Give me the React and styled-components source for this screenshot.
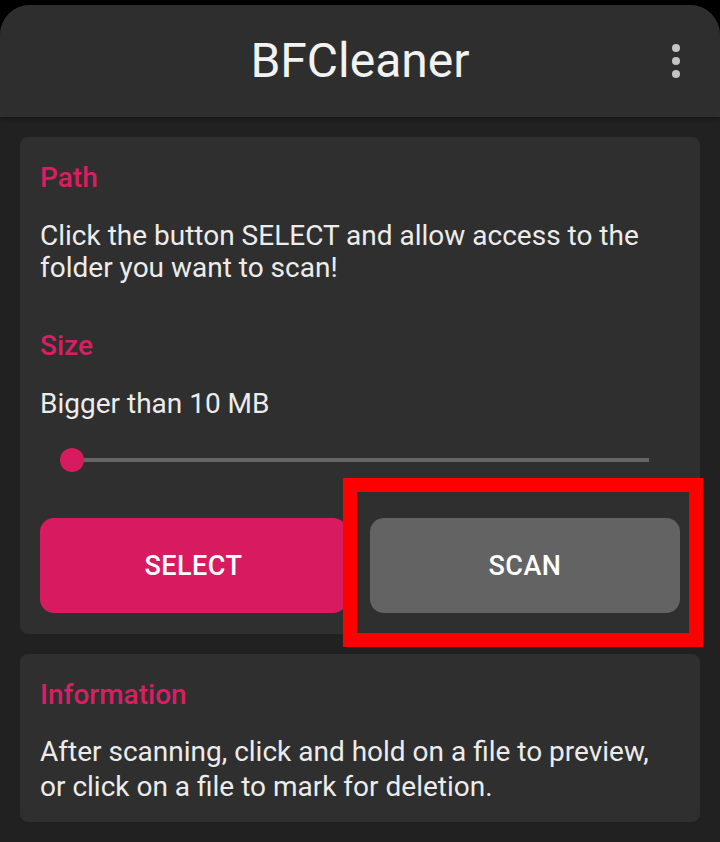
import React from "react";
import styled, { createGlobalStyle } from "styled-components";

const Global = createGlobalStyle`
  html, body { margin: 0; padding: 0; background: #000; }
  body { font-family: Roboto, "Noto Sans", sans-serif; }
  * { box-sizing: border-box; }
`;

const Page = styled.div`
  width: 720px;
  height: 842px;
  background: #000;
  padding-top: 5px;
  overflow: hidden;
`;

const Screen = styled.div`
  height: 100%;
  background: #212121;
  border-radius: 30px 30px 0 0;
  overflow: hidden;
  display: flex;
  flex-direction: column;
`;

const Header = styled.header`
  height: 112px;
  flex: none;
  background: #2e2e2e;
  display: grid;
  grid-template-columns: 1fr auto 1fr;
  align-items: center;
  padding: 0 40px;
  box-shadow: 0 2px 4px rgba(0, 0, 0, 0.35);
  position: relative;
  z-index: 1;
`;

const Title = styled.h1`
  grid-column: 2;
  margin: 0;
  font-size: 48px;
  font-weight: 400;
  color: #f2f2f2;
  line-height: 1;
`;

const Menu = styled.div`
  grid-column: 3;
  justify-self: end;
  display: flex;
  flex-direction: column;
  gap: 5px;
`;

const Dot = styled.span`
  width: 8px;
  height: 8px;
  border-radius: 50%;
  background: #c4c4c4;
`;

const Content = styled.main`
  padding: 20px;
  display: flex;
  flex-direction: column;
  gap: 20px;
`;

const Card = styled.section`
  background: #2f2f2f;
  border-radius: 8px;
  padding: ${(p) => p.$pad || "25px 20px 21px"};
  display: flex;
  flex-direction: column;
  position: relative;
`;

const Label = styled.h2`
  margin: ${(p) => p.$mt || "0"} 0 0;
  font-size: 28px;
  line-height: 32px;
  font-weight: 500;
  color: #d81f63;
`;

const Text = styled.p`
  margin: ${(p) => p.$mt || "26px"} 0 0;
  font-size: 28px;
  line-height: ${(p) => p.$lh || "32px"};
  font-weight: 400;
  color: #ececec;
`;

const Slider = styled.div`
  margin: 28px 31px 0 32px;
  height: 24px;
  position: relative;
  display: flex;
  align-items: center;
`;

const Track = styled.div`
  flex: 1;
  height: 4px;
  background: #666666;
`;

const Thumb = styled.div`
  position: absolute;
  left: -12px;
  top: 0;
  width: 24px;
  height: 24px;
  border-radius: 50%;
  background: #d81b60;
`;

const Buttons = styled.div`
  margin-top: 46px;
  display: grid;
  grid-template-columns: 307px 310px;
  justify-content: space-between;
`;

const Button = styled.button`
  height: 95px;
  border: none;
  border-radius: 14px;
  background: ${(p) => (p.$primary ? "#d81b60" : "#636363")};
  color: #fff;
  font-family: Roboto, "Noto Sans", sans-serif;
  font-size: 27px;
  font-weight: 500;
  letter-spacing: 0.5px;
`;

const Highlight = styled.div`
  position: absolute;
  left: 323px;
  top: 341px;
  width: 360px;
  height: 169px;
  border: 14px solid #ff0000;
  pointer-events: none;
`;

export default function App() {
  return (
    <>
      <Global />
      <Page>
        <Screen>
          <Header>
            <Title>BFCleaner</Title>
            <Menu>
              <Dot />
              <Dot />
              <Dot />
            </Menu>
          </Header>
          <Content>
            <Card>
              <Label>Path</Label>
              <Text>
                Click the button SELECT and allow access to the folder you want
                to scan!
              </Text>
              <Label $mt="46px">Size</Label>
              <Text $mt="26px">Bigger than 10 MB</Text>
              <Slider>
                <Track />
                <Thumb />
              </Slider>
              <Buttons>
                <Button $primary>SELECT</Button>
                <Button>SCAN</Button>
              </Buttons>
              <Highlight />
            </Card>
            <Card $pad="25px 20px 18px">
              <Label>Information</Label>
              <Text $mt="23px" $lh="35px">
                After scanning, click and hold on a file to preview, or click on
                a file to mark for deletion.
              </Text>
            </Card>
          </Content>
        </Screen>
      </Page>
    </>
  );
}
